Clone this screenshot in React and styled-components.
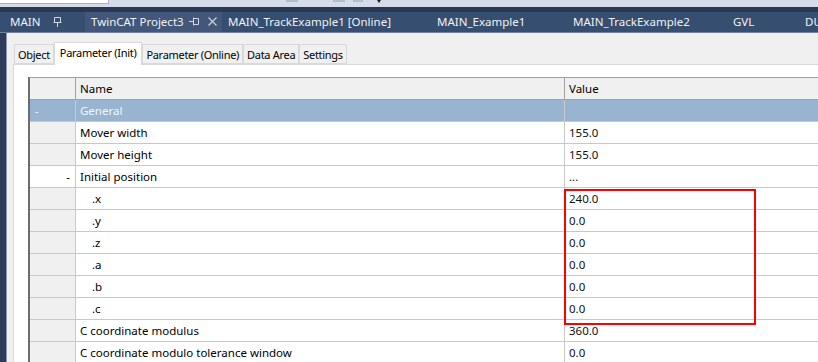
import React from "react";
import styled, { createGlobalStyle } from "styled-components";

const GlobalStyle = createGlobalStyle`
  html, body {
    margin: 0;
    padding: 0;
    background: #f0f0f0;
  }
  * {
    box-sizing: border-box;
  }
`;

const docTabs = [
  { label: "MAIN", width: 81, pin: "down" },
  { label: "TwinCAT Project3", width: 137, pin: "side", close: true, hover: true },
  { label: "MAIN_TrackExample1 [Online]", width: 209 },
  { label: "MAIN_Example1", width: 136 },
  { label: "MAIN_TrackExample2", width: 160 },
  { label: "GVL", width: 72 },
  { label: "DUT", width: 40 },
];

const editorTabs = [
  { label: "Object" },
  { label: "Parameter (Init)", active: true },
  { label: "Parameter (Online)" },
  { label: "Data Area" },
  { label: "Settings" },
];

const rows = [
  { name: "General", value: "", toggle: "-", group: true },
  { name: "Mover width", value: "155.0" },
  { name: "Mover height", value: "155.0" },
  { name: "Initial position", value: "...", toggle: "-", open: true },
  { name: ".x", value: "240.0", child: true },
  { name: ".y", value: "0.0", child: true },
  { name: ".z", value: "0.0", child: true },
  { name: ".a", value: "0.0", child: true },
  { name: ".b", value: "0.0", child: true },
  { name: ".c", value: "0.0", child: true },
  { name: "C coordinate modulus", value: "360.0" },
  { name: "C coordinate modulo tolerance window", value: "0.0" },
];

const PinIcon = ({ dir }) =>
  dir === "side" ? (
    <svg width="11" height="9" viewBox="0 0 11 9">
      <path d="M0 4.5h4M4.5 0.5v8M4.5 1.5h5v6h-5" stroke="#d0d7e3" strokeWidth="1" fill="none" />
    </svg>
  ) : (
    <svg width="9" height="10" viewBox="0 0 9 10">
      <path d="M4.5 10V5.5M0.5 5.5h8M1.5 5.5v-5h6v5" stroke="#d0d7e3" strokeWidth="1" fill="none" />
    </svg>
  );

const CloseIcon = () => (
  <svg width="9" height="9" viewBox="0 0 9 9">
    <path d="M0.5 0.5l8 8M8.5 0.5l-8 8" stroke="#c9d1de" strokeWidth="1.2" fill="none" />
  </svg>
);

export default function App() {
  return (
    <>
      <GlobalStyle />
      <Screen>
        <TopStrip>
          <SearchBox />
          <ToolStub $w={12} $ml={177} />
          <ToolStub $w={12} $ml={35} />
          <ToolStub $w={10} $ml={8} />
          <ToolCaret />
        </TopStrip>
        <DarkStrip />
        <TabBar>
          {docTabs.map((t) => (
            <DocTab key={t.label} $width={t.width} $hover={t.hover}>
              <DocLabel>{t.label}</DocLabel>
              {t.pin && (
                <TabIcons $pin={t.pin}>
                  <PinIcon dir={t.pin} />
                  {t.close && <CloseIcon />}
                </TabIcons>
              )}
            </DocTab>
          ))}
        </TabBar>
        <Body>
          <LeftRail />
          <Editor>
            <EditorTabs>
              {editorTabs.map((t) => (
                <EditorTab key={t.label} $active={t.active}>
                  {t.label}
                </EditorTab>
              ))}
            </EditorTabs>
            <Panel>
              <Grid>
                <HeadCell />
                <HeadCell $pad>Name</HeadCell>
                <HeadCell $pad>Value</HeadCell>
                {rows.map((r) => (
                  <React.Fragment key={r.name}>
                    <ToggleCell $group={r.group} $open={r.open}>
                      {r.toggle}
                    </ToggleCell>
                    <NameCell $group={r.group} $child={r.child}>
                      {r.name}
                    </NameCell>
                    <ValueCell $group={r.group}>{r.value}</ValueCell>
                  </React.Fragment>
                ))}
                <Highlight />
              </Grid>
            </Panel>
          </Editor>
        </Body>
      </Screen>
    </>
  );
}

const Screen = styled.div`
  width: 818px;
  height: 362px;
  overflow: hidden;
  display: flex;
  flex-direction: column;
  font-family: "Noto Sans", "Open Sans", sans-serif;
  font-size: 11.5px;
  color: #000;
  background: #f0f0f0;
`;

const TopStrip = styled.div`
  height: 7px;
  flex: none;
  background: #d6dbe9;
  display: flex;
  align-items: flex-start;
`;

const SearchBox = styled.div`
  width: 109px;
  height: 4px;
  background: #fff;
  border-right: 1px solid #a8b2c6;
  border-bottom: 1px solid #a8b2c6;
`;

const ToolStub = styled.div`
  width: ${(p) => p.$w}px;
  height: 2px;
  margin-left: ${(p) => p.$ml}px;
  background: #b4bccb;
`;

const ToolCaret = styled.div`
  width: 0;
  height: 0;
  margin-left: 14px;
  border-left: 2px solid transparent;
  border-right: 2px solid transparent;
  border-top: 3px solid #1e1e1e;
`;

const DarkStrip = styled.div`
  height: 5px;
  flex: none;
  background: #293955;
`;

const TabBar = styled.div`
  height: 21px;
  flex: none;
  display: flex;
  padding-left: 4px;
  background: #364e6f;
  border-bottom: 1px solid #6f819c;
  overflow: hidden;
`;

const DocTab = styled.div`
  flex: none;
  width: ${(p) => p.$width}px;
  display: flex;
  align-items: center;
  padding: 0 0 1px 6px;
  background: ${(p) => (p.$hover ? "#42577a" : "transparent")};
  color: #f1f3f7;
  white-space: nowrap;
`;

const DocLabel = styled.span`
  font-size: 11.5px;
`;

const TabIcons = styled.span`
  display: flex;
  align-items: center;
  gap: 8px;
  margin-left: ${(p) => (p.$pin === "side" ? 5 : 13)}px;
`;

const Body = styled.div`
  flex: 1;
  display: flex;
  min-height: 0;
`;

const LeftRail = styled.div`
  width: 7px;
  flex: none;
  background: #2c3c5a;
  border-right: 1px solid #8d99ad;
`;

const Editor = styled.div`
  flex: 1;
  display: flex;
  flex-direction: column;
  padding: 8px 0 0 6px;
  background: #f0f0f0;
  min-width: 0;
`;

const EditorTabs = styled.div`
  display: flex;
  align-items: flex-end;
  height: 23px;
  padding-left: 1px;
  position: relative;
  z-index: 1;
`;

const EditorTab = styled.div`
  flex: none;
  height: ${(p) => (p.$active ? 23 : 20)}px;
  margin-bottom: ${(p) => (p.$active ? -1 : 0)}px;
  display: flex;
  align-items: center;
  padding: 0 ${(p) => (p.$active ? 5 : 3)}px ${(p) => (p.$active ? 3 : 0)}px;
  background: ${(p) => (p.$active ? "#fff" : "#f0f0f0")};
  border: 1px solid #d9d9d9;
  border-bottom: ${(p) => (p.$active ? "none" : "1px solid #d9d9d9")};
  white-space: nowrap;
  font-size: 11px;
  letter-spacing: -0.3px;
`;

const Panel = styled.div`
  flex: 1;
  background: #fff;
  border-top: 1px solid #d9d9d9;
  border-left: 1px solid #d9d9d9;
  padding: 12px 0 0 14px;
  min-height: 0;
`;

const Grid = styled.div`
  position: relative;
  display: grid;
  grid-template-columns: 45px 489px 260px;
  grid-auto-rows: 22px;
  border-top: 1px solid #a0a0a0;
  border-left: 2px solid #6d6d6d;
`;

const BaseCell = styled.div`
  display: flex;
  align-items: center;
  white-space: nowrap;
  border-bottom: 1px solid #c8c8c8;
  line-height: 1;
`;

const HeadCell = styled(BaseCell)`
  background: #f0f0f0;
  padding-left: ${(p) => (p.$pad ? 4 : 0)}px;
  border-left: ${(p) => (p.$pad ? "1px solid #a0a0a0" : "none")};
  border-bottom: 1px solid #a0a0a0;
`;

const ToggleCell = styled(BaseCell)`
  justify-content: ${(p) => (p.$open ? "flex-end" : "flex-start")};
  padding: 0 5px;
  background: ${(p) => (p.$group ? "#99b4d1" : p.$open ? "#fff" : "#f0f0f0")};
  color: ${(p) => (p.$group ? "#f4f6fa" : "#000")};
`;

const NameCell = styled(BaseCell)`
  padding-left: ${(p) => (p.$child ? 16 : 4)}px;
  border-left: 1px solid #c8c8c8;
  background: ${(p) => (p.$group ? "#99b4d1" : "#fff")};
  color: ${(p) => (p.$group ? "#f4f6fa" : "#000")};
`;

const ValueCell = styled(BaseCell)`
  padding-left: 4px;
  border-left: 1px solid #c8c8c8;
  background: ${(p) => (p.$group ? "#99b4d1" : "#fff")};
  color: #111;
`;

const Highlight = styled.div`
  position: absolute;
  left: 534px;
  top: 111px;
  width: 192px;
  height: 136px;
  border: 2px solid #f00;
  pointer-events: none;
`;
